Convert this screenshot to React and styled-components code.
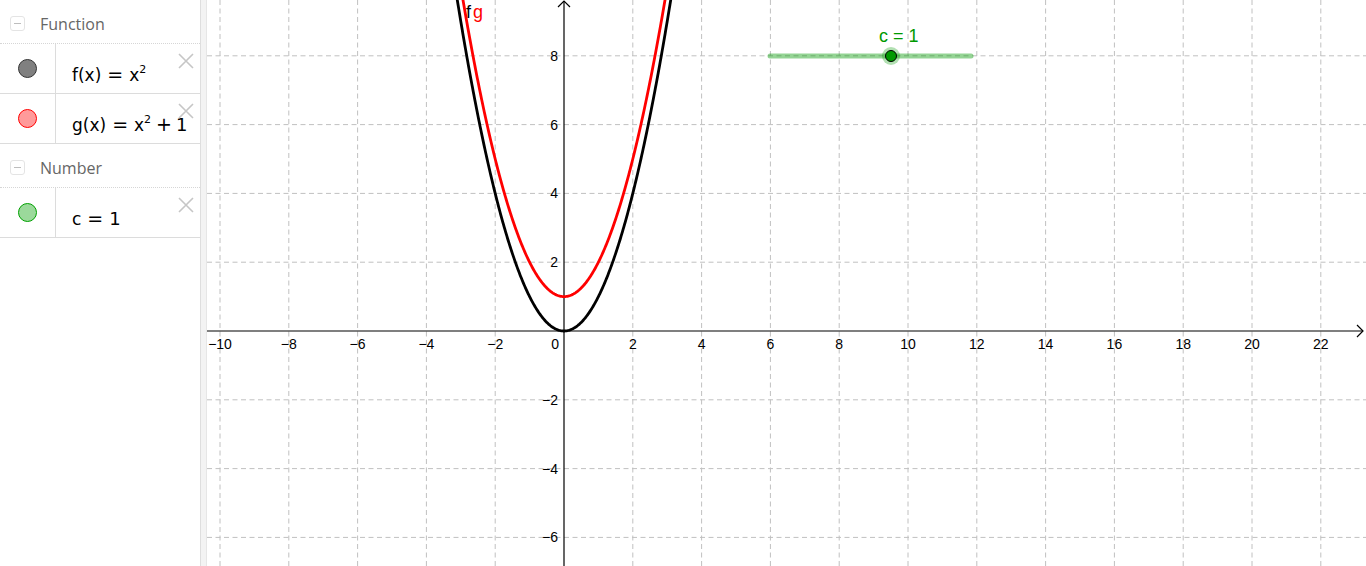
import React from 'react'
import styled, { createGlobalStyle } from 'styled-components'

const GlobalStyle = createGlobalStyle`
  html, body {
    margin: 0;
    padding: 0;
    background: #fff;
  }
  body {
    font-family: 'Open Sans', sans-serif;
    overflow: hidden;
  }
`

// graph geometry (svg coordinates, svg starts at page x = 207)
const GRAPH_W = 1159
const GRAPH_H = 566
const OX = 357
const OY = 331
const S = 34.4

const sx = (x) => OX + x * S
const sy = (y) => OY - y * S

const curvePoints = (fn) => {
  const pts = []
  for (let x = -3.4; x <= 3.4; x += 0.02) {
    pts.push(`${sx(x).toFixed(2)},${sy(fn(x)).toFixed(2)}`)
  }
  return pts.join(' ')
}

const fmt = (n) => (n < 0 ? `\u2212${-n}` : `${n}`)

const xTicks = [-10, -8, -6, -4, -2, 2, 4, 6, 8, 10, 12, 14, 16, 18, 20, 22]
const yTicks = [-6, -4, -2, 2, 4, 6, 8]

const groups = [
  {
    title: 'Function',
    items: [
      { id: 'f', fill: '#808080', stroke: '#333', name: 'f(x)', power: true },
      { id: 'g', fill: '#ff9a9a', stroke: '#ff0000', name: 'g(x)', power: true, plus: '1' },
    ],
  },
  {
    title: 'Number',
    items: [
      { id: 'c', fill: '#9bd99b', stroke: '#00a000', name: 'c', value: '1' },
    ],
  },
]

function FormulaBody({ item }) {
  return (
    <>
      {item.name}
      <Op>=</Op>
      {item.power ? <>x<Sup>2</Sup></> : <Num>{item.value}</Num>}
      {item.plus && <><Op plus>+</Op><Num>{item.plus}</Num></>}
    </>
  )
}

export default function App() {
  return (
    <>
      <GlobalStyle />
      <Page>
        <Algebra>
          {groups.map((group) => (
            <Group key={group.title}>
              <GroupHeader>
                <Collapse />
                <GroupTitle>{group.title}</GroupTitle>
              </GroupHeader>
              {group.items.map((item) => (
                <Row key={item.id}>
                  <MarbleCell>
                    <Marble fill={item.fill} edge={item.stroke} />
                  </MarbleCell>
                  <Formula><FormulaBody item={item} /></Formula>
                  <Delete>
                    <svg width="16" height="16" viewBox="0 0 16 16">
                      <path d="M1 1 L15 15 M15 1 L1 15" stroke="#c6c6c6" strokeWidth="1.6" fill="none" />
                    </svg>
                  </Delete>
                </Row>
              ))}
            </Group>
          ))}
        </Algebra>
        <Divider />
        <GraphView>
          <svg width={GRAPH_W} height={GRAPH_H} viewBox={`0 0 ${GRAPH_W} ${GRAPH_H}`}>
            <g stroke="#c0c0c0" strokeWidth="1" strokeDasharray="5 3.5" fill="none">
              {xTicks.map((t) => (
                <line key={`vx${t}`} x1={sx(t)} y1={0} x2={sx(t)} y2={GRAPH_H} />
              ))}
              {yTicks.map((t) => (
                <line key={`hy${t}`} x1={0} y1={sy(t)} x2={GRAPH_W} y2={sy(t)} />
              ))}
            </g>

            <g stroke="#000" strokeWidth="1.2" fill="none">
              <line x1={0} y1={OY} x2={1156} y2={OY} />
              <path d={`M1150 ${OY - 6} L1156 ${OY} L1150 ${OY + 6}`} />
              <line x1={OX} y1={GRAPH_H} x2={OX} y2={1} />
              <path d={`M${OX - 6} 7 L${OX} 1 L${OX + 6} 7`} />
            </g>

            <g fontFamily="'Liberation Sans', Arial, sans-serif" fontSize="14" fill="#000">
              {xTicks.map((t) => (
                <text key={`lx${t}`} x={sx(t)} y={OY + 18} textAnchor="middle">{fmt(t)}</text>
              ))}
              <text x={OX - 5} y={OY + 18} textAnchor="end">0</text>
              {yTicks.map((t) => (
                <text key={`ly${t}`} x={OX - 6} y={sy(t) + 5} textAnchor="end">{fmt(t)}</text>
              ))}
            </g>

            <polyline points={curvePoints((x) => x * x + 1)} stroke="#ff0000" strokeWidth="2.8" fill="none" />
            <polyline points={curvePoints((x) => x * x)} stroke="#000" strokeWidth="2.8" fill="none" />

            <g fontFamily="'Liberation Sans', Arial, sans-serif" fontSize="18">
              <text x={259} y={18} fill="#000">f</text>
              <text x={266} y={18} fill="#ff0000">g</text>
            </g>

            <line x1={563} y1={56} x2={764} y2={56} stroke="rgba(0,153,0,0.42)" strokeWidth="5" strokeLinecap="round" />
            <circle cx={684} cy={56} r={9} fill="rgba(0,153,0,0.3)" />
            <circle cx={684} cy={56} r={5.5} fill="#009900" stroke="#000" strokeWidth="1" />
            <text x={672} y={42} fontFamily="'Liberation Sans', Arial, sans-serif" fontSize="18" fill="#009900">c = 1</text>
          </svg>
        </GraphView>
      </Page>
    </>
  )
}

const Page = styled.div`
  display: flex;
  width: 1366px;
  height: 566px;
  overflow: hidden;
  background: #fff;
`

const Algebra = styled.div`
  width: 200px;
  flex-shrink: 0;
  display: flex;
  flex-direction: column;
  background: #fff;
`

const Group = styled.div`
  display: flex;
  flex-direction: column;
`

const GroupHeader = styled.div`
  display: flex;
  align-items: center;
  height: 44px;
  padding: 4px 0 0 10px;
  box-sizing: border-box;
  border-bottom: 1px dotted #d6d6d6;
`

const Collapse = styled.span`
  position: relative;
  width: 15px;
  height: 15px;
  border: 1px solid #e4e4e4;
  border-radius: 3px;
  box-sizing: border-box;
  margin-right: 15px;

  &::after {
    content: '';
    position: absolute;
    left: 3px;
    right: 3px;
    top: 6px;
    height: 1px;
    background: #bdbdbd;
  }
`

const GroupTitle = styled.span`
  font-family: 'Open Sans', sans-serif;
  font-size: 16px;
  color: #666;
`

const Row = styled.div`
  display: flex;
  height: 50px;
  box-sizing: border-box;
  border-bottom: 1px solid #dcdcdc;
`

const MarbleCell = styled.div`
  width: 56px;
  flex-shrink: 0;
  display: flex;
  align-items: center;
  justify-content: center;
  border-right: 1px solid #dcdcdc;
  box-sizing: border-box;
`

const Marble = styled.span`
  width: 19px;
  height: 19px;
  border-radius: 50%;
  box-sizing: border-box;
  background: ${(p) => p.fill};
  border: 1px solid ${(p) => p.edge};
`

const Formula = styled.div`
  flex: 1;
  padding: 20px 0 0 16px;
  font-family: 'DejaVu Sans', sans-serif;
  font-size: 17px;
  line-height: 20px;
  color: #000;
  white-space: nowrap;
`

const Op = styled.span`
  font-size: 19px;
  padding: 0 ${(p) => (p.plus ? 4 : 6)}px 0 ${(p) => (p.plus ? 5 : 6)}px;
`

const Num = styled.span`
  font-size: 18px;
`

const Sup = styled.sup`
  font-size: 11px;
  line-height: 0;
  vertical-align: 8px;
`

const Delete = styled.div`
  width: 22px;
  flex-shrink: 0;
  padding-top: 8px;
  margin-left: -16px;
`

const Divider = styled.div`
  width: 7px;
  flex-shrink: 0;
  background: #f3f3f3;
  border-left: 1px solid #dedede;
  border-right: 1px solid #e6e6e6;
  box-sizing: border-box;
`

const GraphView = styled.div`
  flex: 1;
  position: relative;
  overflow: hidden;
  background: #fff;
`
